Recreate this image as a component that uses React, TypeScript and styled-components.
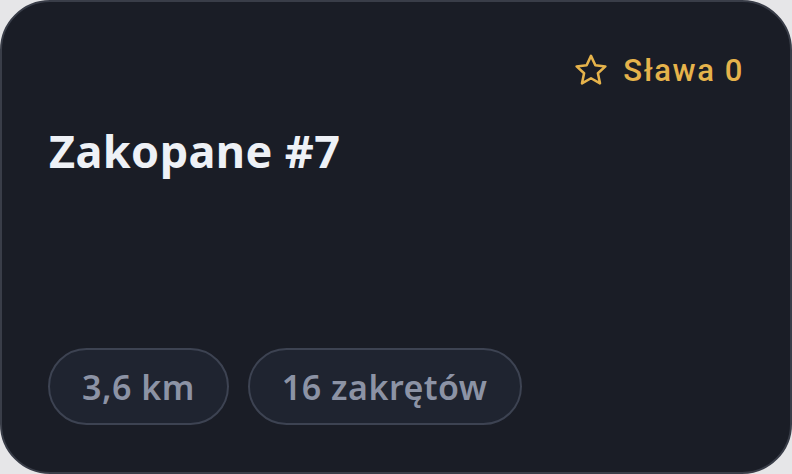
import React from "react";
import styled, { createGlobalStyle } from "styled-components";

const Global = createGlobalStyle`
  html, body { margin: 0; padding: 0; background: #e6e6e8; }
  body { width: 792px; height: 474px; overflow: hidden; }
  * { box-sizing: border-box; }
`;

const Card = styled.div`
  width: 792px;
  height: 474px;
  background: #1a1d26;
  border: 2px solid #393d48;
  border-radius: 50px;
  padding: 46px 48px 47px 46px;
  display: flex;
  flex-direction: column;
`;

const Header = styled.div`
  display: flex;
  justify-content: flex-end;
  align-items: center;
  gap: 14px;
  height: 44px;
  margin-top: 0;
`;

const Fame = styled.span`
  font-family: "Roboto", "Liberation Sans", sans-serif;
  font-weight: 500;
  font-size: 31px;
  color: #e6b34b;
  letter-spacing: 1.6px;
  margin-right: -2px;
`;

const Title = styled.h1`
  margin: 31px 0 0 1px;
  font-family: "Noto Sans", "Liberation Sans", sans-serif;
  font-weight: 700;
  font-size: 45px;
  letter-spacing: 0.4px;
  line-height: 56px;
  color: #eef1f6;
`;

const Tags = styled.div`
  margin-top: auto;
  display: flex;
  gap: 19px;
`;

const Tag = styled.span`
  height: 77px;
  padding: 0 32px;
  display: inline-flex;
  align-items: center;
  border: 2px solid #3d4352;
  background: #1f2430;
  border-radius: 40px;
  font-family: "Noto Sans", "Liberation Sans", sans-serif;
  font-weight: 600;
  font-size: 34px;
  letter-spacing: 0.5px;
  color: #8c93a5;
`;

const StarIcon = () => (
  <svg width="36" height="36" viewBox="0 0 24 24" fill="none" stroke="#e6b34b" strokeWidth="1.7" strokeLinejoin="round">
    <path d="M12 2.6l2.9 6.2 6.7.8-5 4.6 1.4 6.7L12 17.5 6 20.9l1.4-6.7-5-4.6 6.7-.8z" />
  </svg>
);

export default function App() {
  return (
    <>
      <Global />
      <Card>
        <Header>
          <StarIcon />
          <Fame>Sława 0</Fame>
        </Header>
        <Title>Zakopane #7</Title>
        <Tags>
          <Tag>3,6 km</Tag>
          <Tag>16 zakrętów</Tag>
        </Tags>
      </Card>
    </>
  );
}
